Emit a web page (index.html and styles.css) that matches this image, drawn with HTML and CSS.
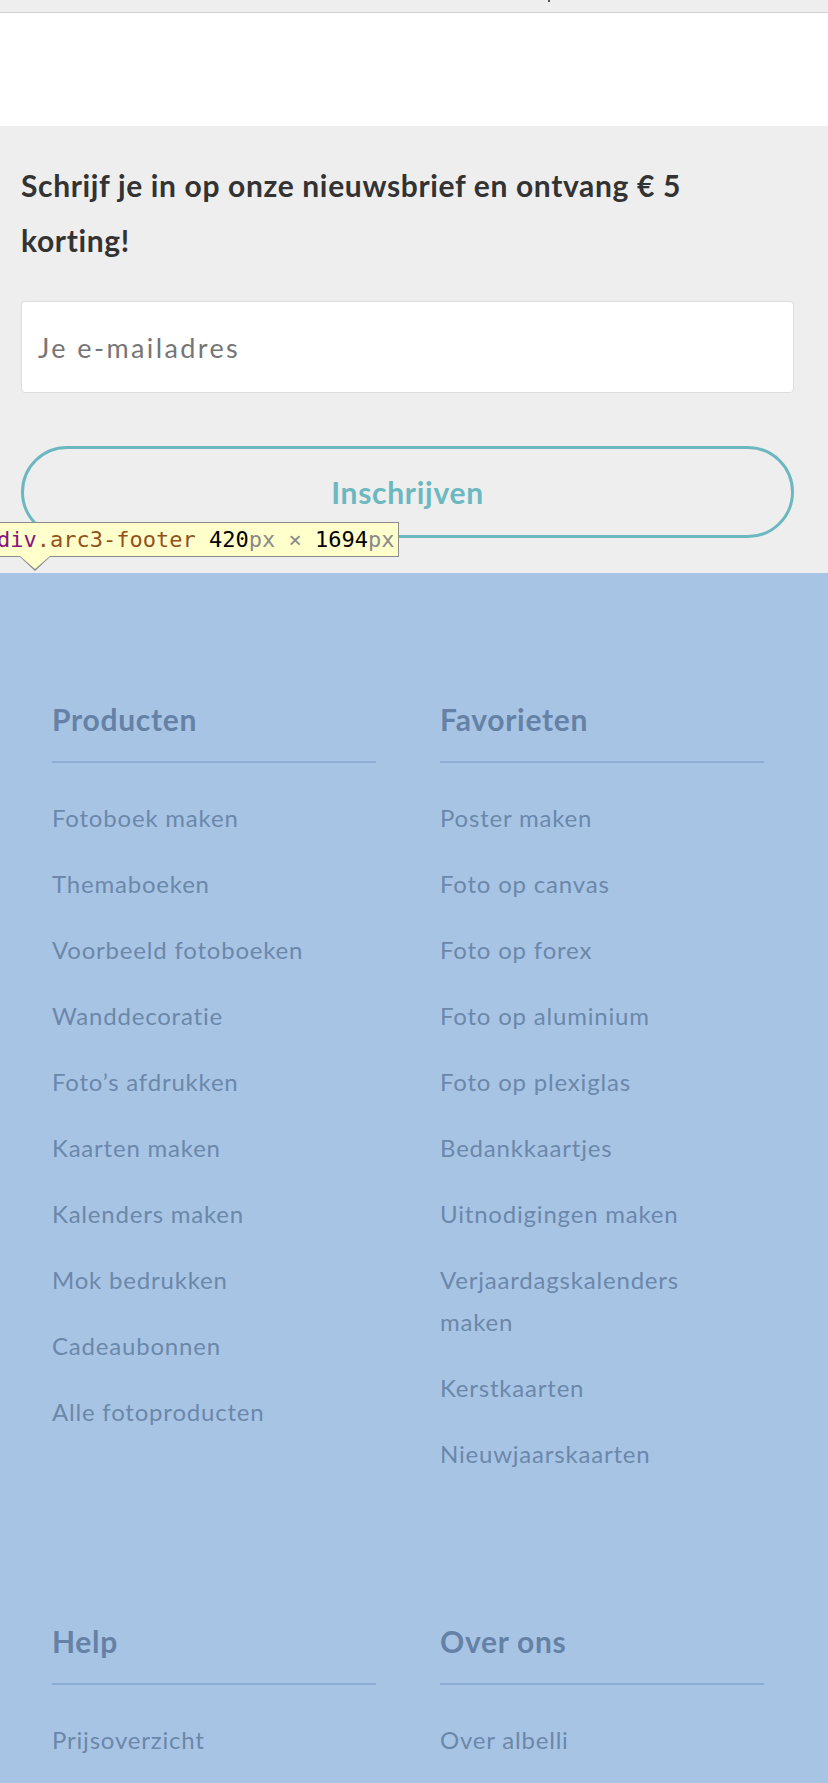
FILE: index.html
```html
<!DOCTYPE html>
<html lang="nl">
<head>
<meta charset="utf-8">
<title>albelli</title>
<link rel="stylesheet" href="styles.css">
</head>
<body>
<div class="topbar"><span class="topmark"></span></div>
<div class="blank"></div>
<section class="newsletter">
  <h2 class="nl-title">Schrijf je in op onze nieuwsbrief en ontvang € 5 korting!</h2>
  <input class="nl-input" type="email" placeholder="Je e-mailadres">
  <button class="nl-button" type="button">Inschrijven</button>
</section>
<footer class="arc3-footer">
  <div class="inspect-tip"><span class="t-tag">div</span><span class="t-cls">.arc3-footer</span> <span class="t-num">420</span><span class="t-unit">px</span> <span class="t-unit">×</span> <span class="t-num">1694</span><span class="t-unit">px</span></div>
  <div class="footer-grid">
    <div class="fcol">
      <h3 class="fhead">Producten</h3>
      <ul class="flinks">
        <li>Fotoboek maken</li>
        <li>Themaboeken</li>
        <li>Voorbeeld fotoboeken</li>
        <li>Wanddecoratie</li>
        <li>Foto’s afdrukken</li>
        <li>Kaarten maken</li>
        <li>Kalenders maken</li>
        <li>Mok bedrukken</li>
        <li>Cadeaubonnen</li>
        <li>Alle fotoproducten</li>
      </ul>
    </div>
    <div class="fcol">
      <h3 class="fhead">Favorieten</h3>
      <ul class="flinks">
        <li>Poster maken</li>
        <li>Foto op canvas</li>
        <li>Foto op forex</li>
        <li>Foto op aluminium</li>
        <li>Foto op plexiglas</li>
        <li>Bedankkaartjes</li>
        <li>Uitnodigingen maken</li>
        <li class="narrow">Verjaardagskalenders maken</li>
        <li>Kerstkaarten</li>
        <li>Nieuwjaarskaarten</li>
      </ul>
    </div>
    <div class="fcol">
      <h3 class="fhead">Help</h3>
      <ul class="flinks">
        <li>Prijsoverzicht</li>
      </ul>
    </div>
    <div class="fcol">
      <h3 class="fhead">Over ons</h3>
      <ul class="flinks">
        <li>Over albelli</li>
      </ul>
    </div>
  </div>
</footer>
</body>
</html>
```
FILE: styles.css
```css
* { box-sizing: border-box; }
html, body { margin: 0; padding: 0; }
body {
  width: 828px;
  height: 1783px;
  overflow: hidden;
  font-family: Lato, "Liberation Sans", sans-serif;
  background: #a8c4e4;
}
.topbar {
  height: 13px;
  background: #eeeeee;
  border-bottom: 1px solid #d2d2d2;
  display: flex;
}
.topmark {
  width: 2px;
  height: 2px;
  margin-left: 548px;
  background: #555;
}
.blank {
  height: 113px;
  background: #ffffff;
}
.newsletter {
  background: #eeeeee;
  padding: 32px 34px 35px 21px;
  display: flex;
  flex-direction: column;
}
.nl-title {
  margin: 0;
  font-size: 30px;
  line-height: 55px;
  font-weight: 700;
  letter-spacing: 0.65px;
  color: #333333;
  padding-right: 60px;
}
.nl-input {
  margin-top: 33px;
  height: 92px;
  width: 773px;
  border: 1px solid #dddddd;
  border-radius: 4px;
  background: #fff;
  padding: 0 16px;
  font-family: Lato, "Liberation Sans", sans-serif;
  font-size: 27px;
  letter-spacing: 2.4px;
  color: #333;
  outline: none;
}
.nl-input::placeholder { color: #767676; }
.nl-button {
  margin-top: 53px;
  height: 92px;
  width: 773px;
  border: 3px solid #6cb8c0;
  border-radius: 46px;
  background: transparent;
  color: #6cb8c0;
  font-family: Lato, "Liberation Sans", sans-serif;
  font-size: 30px;
  font-weight: 700;
  letter-spacing: 0.7px;
}
.arc3-footer {
  position: relative;
  background: #a8c4e4;
  padding: 128px 0 0 52px;
}
.inspect-tip {
  position: absolute;
  left: -12px;
  top: -51px;
  height: 35px;
  padding: 0 4px 0 8px;
  background: #ffffcc;
  border: 1px solid #8c8c8c;
  font-family: "DejaVu Sans Mono", "Liberation Mono", monospace;
  font-size: 22px;
  line-height: 33px;
  white-space: nowrap;
  color: #222;
}
.inspect-tip::after,
.inspect-tip::before {
  content: "";
  position: absolute;
  left: 31px;
  width: 0;
  height: 0;
  border-left: 15px solid transparent;
  border-right: 15px solid transparent;
}
.inspect-tip::before {
  top: 34px;
  border-top: 14px solid #8c8c8c;
}
.inspect-tip::after {
  top: 33px;
  border-top: 13px solid #ffffcc;
}
.t-tag { color: #881280; }
.t-cls { color: #92521c; }
.t-num { color: #000; }
.t-unit { color: #8a8a8a; }
.footer-grid {
  display: grid;
  grid-template-columns: 324px 324px;
  column-gap: 64px;
  row-gap: 148px;
}
.fhead {
  margin: 0;
  font-size: 30px;
  line-height: 36px;
  font-weight: 700;
  letter-spacing: 0.7px;
  color: #6582a6;
  padding-bottom: 24px;
  border-bottom: 2px solid #8eadd2;
}
.flinks {
  list-style: none;
  margin: 34px 0 0;
  padding: 0;
  display: flex;
  flex-direction: column;
  gap: 24px;
}
.flinks li {
  font-size: 24px;
  line-height: 42px;
  letter-spacing: 0.8px;
  color: #6b88ab;
}
.flinks li.narrow { max-width: 290px; }
```
